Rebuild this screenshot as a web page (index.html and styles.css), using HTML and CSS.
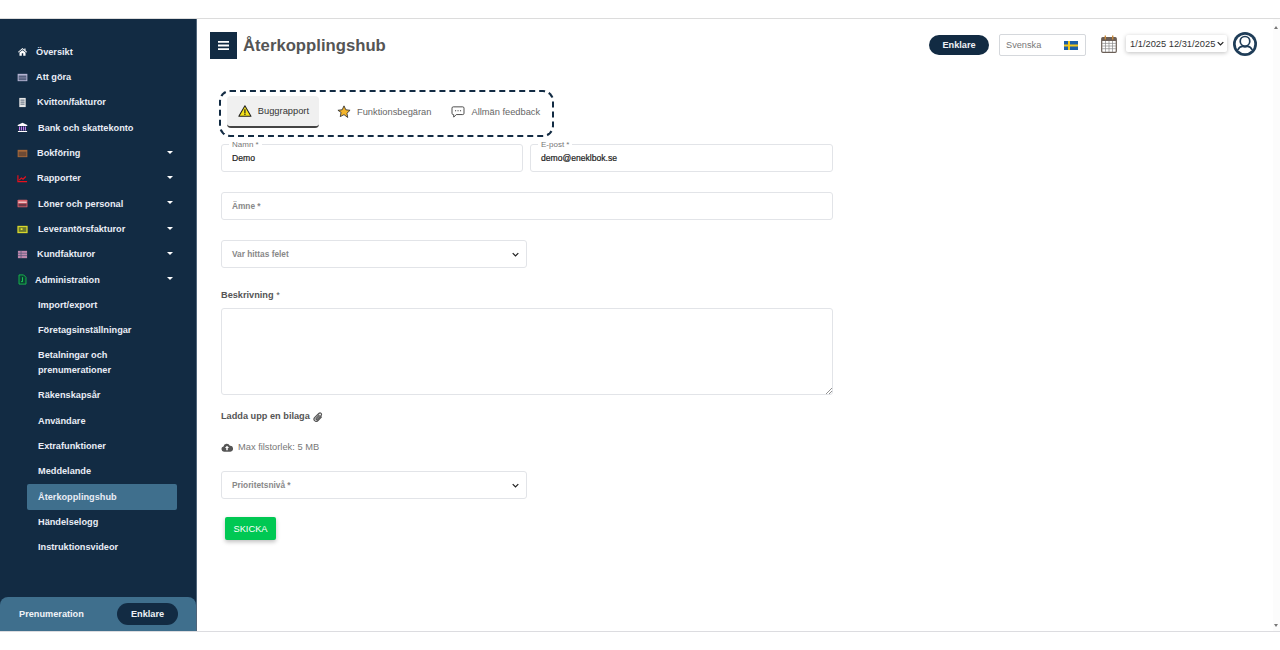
FILE: index.html
```html
<!DOCTYPE html>
<html lang="sv">
<head>
    <meta charset="UTF-8">
    <title>Återkopplingshub</title>
    <link rel="stylesheet" href="styles.css">
</head>
<body>
    <div id="app">
        <aside id="sidebar">
            <nav id="side-nav">
                <a class="nav-item">
                    <svg class="nav-icon" viewBox="0 0 12 12"><path fill="#fff" d="M6 2.200 1 6.500l.7.6L6 3.500l4.300 3.600.7-.6L9.300 5V2.800H8V4zM2.700 7.200v3.300h2.500V8h1.600v2.500h2.500V7.200L6 4.500z"/></svg>
                    <span class="gap-1">Översikt</span>
                </a>
                <a class="nav-item">
                    <svg class="nav-icon" viewBox="0 0 12 12"><rect x=".7" y="2" width="10.600" height="8" fill="#b4b4d2"/><rect x="1.800" y="3.800" width="8.400" height="5.200" fill="#56617f"/><path stroke="#9a9ab8" stroke-width=".6" d="M1.800 6.400h8.400"/></svg>
                    <span class="gap-1">Att göra</span>
                </a>
                <a class="nav-item">
                    <svg class="nav-icon" viewBox="0 0 12 12"><rect x="2.500" y="1" width="7" height="10" fill="#e6e6e6"/><path stroke="#3a4d62" stroke-width=".9" d="M3.800 3.400h4.400M3.800 5.600h4.400M3.800 7.800h4.400"/></svg>
                    <span class="gap-2">Kvitton/fakturor</span>
                </a>
                <a class="nav-item">
                    <svg class="nav-icon" viewBox="0 0 12 12"><path fill="#fff" d="M6 .8.800 3.400v1h10.400v-1zM1 9.800h10V11H1z"/><path stroke="#c27af0" stroke-width="1.200" d="M2.800 5v4.400M4.900 5v4.400M7.100 5v4.400M9.200 5v4.400"/></svg>
                    <span class="gap-3">Bank och skattekonto</span>
                </a>
                <a class="nav-item">
                    <svg class="nav-icon" viewBox="0 0 12 12"><rect x=".7" y="2" width="10.600" height="8" fill="#a5683a"/><rect x="1.800" y="4" width="8.400" height="5" fill="#6d4a35"/></svg>
                    <span class="gap-2">Bokföring</span><i class="caret"></i>
                </a>
                <a class="nav-item">
                    <svg class="nav-icon" viewBox="0 0 12 12"><path fill="none" stroke="#e8101c" stroke-width="1.300" d="M1 2.500v7h10M2.400 7.800l2.400-2.400 1.800 1.300 3-2.900"/></svg>
                    <span class="gap-2">Rapporter</span><i class="caret"></i>
                </a>
                <a class="nav-item">
                    <svg class="nav-icon" viewBox="0 0 12 12"><rect x=".6" y="1.800" width="10.800" height="8.400" rx="1" fill="#d9606a"/><rect x="1.500" y="3.900" width="9" height="1.500" fill="#f0c8c8"/><rect x="1.600" y="6.200" width="8.800" height="3" fill="#6b3948"/></svg>
                    <span class="gap-3">Löner och personal</span><i class="caret"></i>
                </a>
                <a class="nav-item">
                    <svg class="nav-icon" viewBox="0 0 12 12"><rect x=".4" y="2" width="11.200" height="8" fill="#d8d82c"/><rect x="1.800" y="3.400" width="8.400" height="5.200" fill="#6e7a2c"/><rect x="4" y="4.600" width="2" height="2" fill="#e5e53a"/></svg>
                    <span class="gap-3">Leverantörsfakturor</span><i class="caret"></i>
                </a>
                <a class="nav-item">
                    <svg class="nav-icon" viewBox="0 0 12 12"><rect x="1" y="2" width="10" height="8" fill="#c088ae"/><path stroke="#57597a" stroke-width=".8" d="M1 4.600h10M1 7.200h10M4.400 2v8"/></svg>
                    <span class="gap-2">Kundfakturor</span><i class="caret"></i>
                </a>
                <a class="nav-item">
                    <svg class="nav-icon" viewBox="0 0 12 12"><path fill="#0c3f35" stroke="#17c04e" stroke-width="1" d="M2.200 1h5l2.600 2.600V11H2.200z"/><path stroke="#19d35a" stroke-width="1" d="M6 3.500v5M4.400 8.300H6"/></svg>
                    <span class="gap-0">Administration</span><i class="caret"></i>
                </a>
                <a class="sub-item">Import/export</a>
                <a class="sub-item">Företagsinställningar</a>
                <a class="sub-item">Betalningar och<br>prenumerationer</a>
                <a class="sub-item">Räkenskapsår</a>
                <a class="sub-item">Användare</a>
                <a class="sub-item">Extrafunktioner</a>
                <a class="sub-item">Meddelande</a>
                <a class="sub-item active">Återkopplingshub</a>
                <a class="sub-item">Händelselogg</a>
                <a class="sub-item">Instruktionsvideor</a>
            </nav>
            <div id="side-footer">
                <span>Prenumeration</span>
                <span class="pill">Enklare</span>
            </div>
        </aside>

        <main id="main">
            <header id="topbar">
                <button class="menu-btn">
                    <svg viewBox="0 0 14 12" width="13" height="11"><path stroke="#fff" stroke-width="2" d="M1 2h12M1 6h12M1 10h12"/></svg>
                </button>
                <h1>Återkopplingshub</h1>
                <div id="top-right">
                    <span class="pill pill-top">Enklare</span>
                    <div class="lang-box">
                        <span>Svenska</span>
                        <svg viewBox="0 0 14 9" width="14" height="9"><rect width="14" height="9" fill="#1b5fa8"/><path stroke="#f2c81e" stroke-width="2" d="M5 0v9M0 4.500h14"/></svg>
                    </div>
                    <svg class="cal-icon" viewBox="0 0 16 18" width="16" height="18"><rect x=".7" y="2.700" width="14.600" height="14.600" rx="1" fill="#fff" stroke="#6b5f57" stroke-width="1.200"/><rect x="1" y="3" width="14" height="3" fill="#6b5f57"/><path stroke="#8a8a8a" stroke-width=".7" d="M1 8.400h14M1 11h14M1 13.700h14M4.500 6v11M8 6v11M11.500 6v11"/><path stroke="#c98a3c" stroke-width="1.400" d="M4.300 .6v3.800M11.700 .6v3.800"/></svg>
                    <div class="date-select">
                        <span>1/1/2025 12/31/2025</span>
                        <svg class="chev" viewBox="0 0 10 6" width="7" height="5"><path fill="none" stroke="#222" stroke-width="1.800" d="M1 1l4 4 4-4"/></svg>
                    </div>
                    <svg class="avatar" viewBox="0 0 24 24" width="24" height="24"><circle cx="12" cy="12" r="12" fill="#1f3d58"/><circle cx="12" cy="12" r="9.300" fill="#fff"/><circle cx="12" cy="9.300" r="4.800" fill="#fff" stroke="#1f3d58" stroke-width="1.700"/><path fill="none" stroke="#1f3d58" stroke-width="1.700" d="M4.800 18c1.200-2.600 3.200-3.700 4.700-3.700 1 .5 1.700.7 2.500.7s1.500-.2 2.500-.7c1.500 0 3.500 1.100 4.700 3.700"/></svg>
                </div>
            </header>

            <div id="content">
                <div class="tabs">
                    <div class="tab selected">
                        <svg viewBox="0 0 16 14" width="15" height="14"><path fill="#f5e21a" stroke="#222" stroke-width="1.200" stroke-linejoin="round" d="M8 1 15 13H1z"/><path stroke="#222" stroke-width="1.400" d="M8 5v4.500M8 10.300v1.300"/></svg>
                        <span>Buggrapport</span>
                    </div>
                    <div class="tab">
                        <svg viewBox="0 0 16 15" width="14" height="13"><path fill="#f4b52c" stroke="#333" stroke-width="1" stroke-linejoin="round" d="m8 1 2.100 4.500 4.900.6-3.600 3.400.9 4.900L8 11.100l-4.300 2.300.9-4.900L1 6.100l4.900-.6z"/></svg>
                        <span>Funktionsbegäran</span>
                    </div>
                    <div class="tab">
                        <svg viewBox="0 0 16 14" width="14" height="12"><path fill="#fff" stroke="#444" stroke-width="1.100" d="M2.500 1h11A1.500 1.500 0 0 1 15 2.500v6a1.500 1.500 0 0 1-1.500 1.500H6l-3 3v-3h-.5A1.500 1.500 0 0 1 1 8.500v-6A1.500 1.500 0 0 1 2.500 1z"/><path stroke="#444" stroke-width="1.300" d="M4.500 5.500h1.300M7.400 5.500h1.300M10.300 5.500h1.300"/></svg>
                        <span>Allmän feedback</span>
                    </div>
                </div>

                <div class="field-row">
                    <div class="field">
                        <label class="float-label">Namn *</label>
                        <span class="field-value">Demo</span>
                    </div>
                    <div class="field">
                        <label class="float-label">E-post *</label>
                        <span class="field-value">demo@eneklbok.se</span>
                    </div>
                </div>

                <div class="field subject">
                    <span class="placeholder">Ämne *</span>
                </div>

                <div class="field select-field where">
                    <span class="placeholder">Var hittas felet</span>
                    <svg class="chev" viewBox="0 0 10 6" width="7" height="5"><path fill="none" stroke="#222" stroke-width="1.800" d="M1 1l4 4 4-4"/></svg>
                </div>

                <div class="desc-label">Beskrivning <span class="light">*</span></div>
                <div class="textarea-box">
                    <svg class="grip" viewBox="0 0 7 7" width="7" height="7"><path stroke="#777" stroke-width=".8" d="M1 7l6-6M4 7l3-3"/></svg>
                </div>

                <div class="upload-label">
                    Ladda upp en bilaga
                    <svg viewBox="0 0 12 12" width="10" height="10"><path fill="none" stroke="#555" stroke-width="1.500" d="M10.500 5.500 6 10.200c-1.200 1.200-3 1.200-4 .2s-1-2.700.2-3.900L7 1.800c.8-.8 2-.8 2.700-.1s.7 1.800-.1 2.600L5 8.800c-.4.400-1 .4-1.300.1s-.3-.9.100-1.300l4-4"/></svg>
                </div>

                <div class="max-size">
                    <svg viewBox="0 0 16 12" width="12" height="9"><path fill="#555" d="M4 11.500A3.500 3.500 0 0 1 3.300 4.600 4.500 4.500 0 0 1 11.800 3.700 3.900 3.900 0 0 1 12.500 11.500z"/><path fill="#fff" d="M8 3.500 5.200 6.500h1.800v3h2v-3h1.800z"/></svg>
                    <span>Max filstorlek: 5 MB</span>
                </div>

                <div class="field select-field priority">
                    <span class="placeholder">Prioritetsnivå *</span>
                    <svg class="chev" viewBox="0 0 10 6" width="7" height="5"><path fill="none" stroke="#222" stroke-width="1.800" d="M1 1l4 4 4-4"/></svg>
                </div>

                <button class="send-btn">SKICKA</button>
            </div>
            <div id="scrollbar">
                <i class="arrow-up"></i>
                <i class="arrow-down"></i>
            </div>
        </main>
    </div>
</body>
</html>
```

FILE: styles.css
```css
html, body {
    height: 100%;
    margin: 0;
    padding: 0;
    background: #fff;
}
body {
    font-family: "Liberation Sans", Arial, sans-serif;
    padding-top: 18px;
    box-sizing: border-box;
    overflow: hidden;
}
#app {
    display: flex;
    height: 614px;
    box-sizing: border-box;
    border-top: 1px solid #dcdcdc;
    border-bottom: 1px solid #dcdce0;
}
#sidebar {
    width: 197px;
    flex-shrink: 0;
    background: #122b43;
    border-right: 1px solid #50657a;
    box-sizing: border-box;
    display: flex;
    flex-direction: column;
}
#side-nav {
    flex: 1;
    padding-top: 20px;
}
.nav-item {
    display: flex;
    align-items: center;
    height: 25.35px;
    padding: 0 23px 0 17px;
    font-size: 9.2px;
    font-weight: bold;
    color: #e9edf6;
}
.nav-icon {
    width: 11px;
    height: 11px;
    flex-shrink: 0;
}
.gap-0 { margin-left: 7px; }
.gap-1 { margin-left: 8px; }
.gap-2 { margin-left: 9px; }
.gap-3 { margin-left: 10px; }
.caret {
    margin-left: auto;
    width: 0;
    height: 0;
    border-left: 3.5px solid transparent;
    border-right: 3.5px solid transparent;
    border-top: 3.5px solid #fff;
    margin-top: -2px;
}
.sub-item {
    display: block;
    margin: 0 19px 0 27px;
    padding: 5.15px 0 5.15px 11px;
    font-size: 9.2px;
    line-height: 15px;
    font-weight: bold;
    color: #e9edf6;
    border-radius: 2px;
}
.sub-item.active {
    background: #3f6f8d;
}
#side-footer {
    height: 34px;
    background: #3f6f8d;
    border-radius: 8px 8px 0 0;
    display: flex;
    align-items: center;
    justify-content: space-between;
    padding: 0 18px 0 19px;
    font-size: 9.2px;
    font-weight: bold;
    color: #f0f3f8;
}
.pill {
    background: #122b43;
    color: #eef1f6;
    border-radius: 11px;
    width: 61px;
    height: 22px;
    display: flex;
    align-items: center;
    justify-content: center;
    font-size: 9.2px;
    font-weight: bold;
}
#main {
    flex: 1;
    position: relative;
    min-width: 0;
}
#topbar {
    display: flex;
    align-items: center;
    padding: 13px 23px 0 13px;
    height: 27px;
}
.menu-btn {
    width: 27px;
    height: 27px;
    padding: 0;
    border: none;
    background: #122b43;
    display: flex;
    align-items: center;
    justify-content: center;
}
#topbar h1 {
    margin: 0 0 0 6px;
    font-size: 16.7px;
    font-weight: bold;
    color: #555;
}
#top-right {
    margin: -1px 0 0 auto;
    display: flex;
    align-items: center;
}
.pill-top {
    width: 60px;
    height: 20px;
}
.lang-box {
    margin-left: 10px;
    width: 87px;
    height: 22px;
    box-sizing: border-box;
    border: 1px solid #d5d8dc;
    border-radius: 2px;
    display: flex;
    align-items: center;
    justify-content: space-between;
    padding: 0 7px 0 6px;
    font-size: 9.2px;
    color: #777;
}
.cal-icon {
    margin: -3px 0 0 15px;
}
.date-select {
    margin: -3px 0 0 9px;
    width: 101px;
    height: 17px;
    box-sizing: border-box;
    display: flex;
    align-items: center;
    justify-content: space-between;
    padding: 0 3px 0 4px;
    font-size: 9.3px;
    color: #333;
    background: #fff;
    border-radius: 2px;
    box-shadow: 0 1px 4px rgba(0, 0, 0, 0.25);
}
.avatar {
    margin: -3px 0 0 6px;
}
#content {
    padding: 31px 0 0 24px;
    width: 612px;
}
.tabs {
    display: flex;
    align-items: center;
    width: 335px;
    height: 47px;
    margin-left: -2px;
    box-sizing: border-box;
    padding: 0 6px 4px;
    border: 2px dashed #122b43;
    border-radius: 11px;
}
.tab {
    display: flex;
    align-items: center;
    flex-shrink: 0;
    white-space: nowrap;
    gap: 6px;
    height: 32px;
    padding: 0 10px 0 11px;
    font-size: 9.3px;
    color: #666;
    box-sizing: border-box;
}
.tab + .tab {
    padding: 0 10px;
    margin-left: 8px;
}
.tab + .tab + .tab {
    margin-left: 0;
}
.tab.selected {
    width: 92px;
    color: #333;
    background: #f0f0f0;
    border-bottom: 2px solid #444;
    border-radius: 4px;
}
.field-row {
    display: flex;
    gap: 7px;
    margin-top: 7px;
}
.field {
    position: relative;
    flex: 1;
    height: 28px;
    box-sizing: border-box;
    border: 1px solid #e2e4e8;
    border-radius: 3px;
    display: flex;
    align-items: center;
    padding: 0 10px;
    font-size: 8.6px;
    background: #fff;
}
.field-row .field:first-child {
    flex: none;
    width: 302px;
}
.float-label {
    position: absolute;
    top: -5px;
    left: 7px;
    padding: 0 3px;
    background: #fff;
    font-size: 8px;
    line-height: 9px;
    color: #777;
}
.field-value {
    color: #222;
    -webkit-text-stroke: 0.2px #222;
}
.placeholder {
    color: #888;
    font-weight: bold;
    font-size: 8.3px;
    margin-top: -1px;
}
.subject {
    margin-top: 20px;
}
.select-field {
    width: 306px;
    flex: none;
    justify-content: space-between;
    padding-right: 7px;
}
.where {
    margin-top: 20px;
}
.desc-label {
    margin-top: 22px;
    font-size: 9.2px;
    line-height: 11px;
    font-weight: bold;
    color: #555;
}
.light {
    font-weight: normal;
}
.textarea-box {
    position: relative;
    margin-top: 7px;
    height: 87px;
    box-sizing: border-box;
    border: 1px solid #e2e4e8;
    border-radius: 3px;
}
.grip {
    position: absolute;
    right: 0;
    bottom: 0;
}
.upload-label {
    margin-top: 16px;
    display: flex;
    align-items: center;
    gap: 3px;
    font-size: 9.2px;
    line-height: 11px;
    font-weight: bold;
    color: #555;
}
.max-size {
    margin-top: 20px;
    display: flex;
    align-items: center;
    gap: 5px;
    font-size: 9.3px;
    line-height: 11px;
    color: #777;
}
.priority {
    margin-top: 18px;
}
.send-btn {
    display: block;
    margin: 18px 0 0 4px;
    width: 51px;
    height: 23px;
    padding: 0;
    border: none;
    border-radius: 2px;
    background: #00c853;
    color: #fff;
    font-family: inherit;
    font-size: 9.3px;
    box-shadow: 0 2px 4px rgba(0, 0, 0, 0.25);
}
#scrollbar {
    position: absolute;
    top: 0;
    right: 0;
    bottom: 0;
    width: 7px;
    background: #fcfcfc;
}
.arrow-up, .arrow-down {
    position: absolute;
    left: 1px;
    width: 0;
    height: 0;
    border-left: 2.5px solid transparent;
    border-right: 2.5px solid transparent;
}
.arrow-up {
    top: 7px;
    border-bottom: 3px solid #777;
}
.arrow-down {
    bottom: 4px;
    border-top: 3px solid #777;
}
```
